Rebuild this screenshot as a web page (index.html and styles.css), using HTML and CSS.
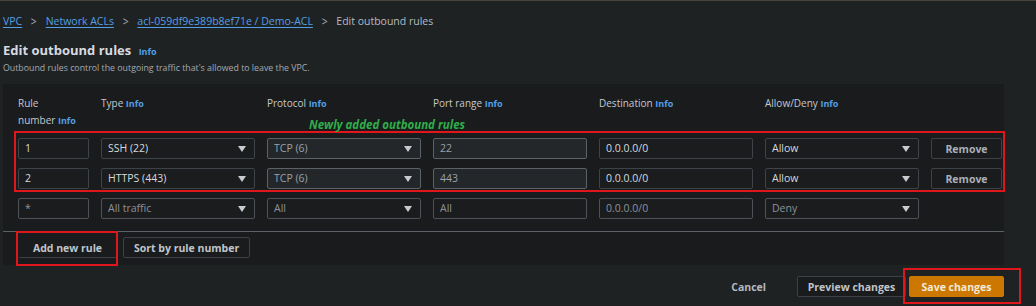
FILE: index.html
```html
<!DOCTYPE html>
<html lang="en">
<head>
    <meta charset="UTF-8">
    <meta name="viewport" content="width=device-width, initial-scale=1.0">
    <title>Edit outbound rules</title>
    <link rel="stylesheet" href="styles.css">
</head>
<body>
    <nav class="crumbs">
        <a href="#">VPC</a>
        <span class="sep">&gt;</span>
        <a href="#">Network ACLs</a>
        <span class="sep">&gt;</span>
        <a href="#">acl-059df9e389b8ef71e / Demo-ACL</a>
        <span class="sep">&gt;</span>
        <span class="current">Edit outbound rules</span>
    </nav>

    <h1 class="title">Edit outbound rules <span class="info">Info</span></h1>
    <p class="subtitle">Outbound rules control the outgoing traffic that's allowed to leave the VPC.</p>

    <div class="card">
        <div class="rules">
            <div class="head">Rule<br>number <span class="info">Info</span></div>
            <div class="head">Type <span class="info">Info</span></div>
            <div class="head">Protocol <span class="info">Info</span></div>
            <div class="head">Port range <span class="info">Info</span></div>
            <div class="head">Destination <span class="info">Info</span></div>
            <div class="head">Allow/Deny <span class="info">Info</span></div>
            <div class="head"></div>

            <div class="field">1</div>
            <div class="field select">SSH (22)</div>
            <div class="field select locked">TCP (6)</div>
            <div class="field locked">22</div>
            <div class="field">0.0.0.0/0</div>
            <div class="field select">Allow</div>
            <button class="btn">Remove</button>

            <div class="field">2</div>
            <div class="field select">HTTPS (443)</div>
            <div class="field select locked">TCP (6)</div>
            <div class="field locked">443</div>
            <div class="field">0.0.0.0/0</div>
            <div class="field select">Allow</div>
            <button class="btn">Remove</button>

            <div class="field dim">*</div>
            <div class="field select dim">All traffic</div>
            <div class="field select dim">All</div>
            <div class="field dim">All</div>
            <div class="field dim">0.0.0.0/0</div>
            <div class="field select dim">Deny</div>
            <div></div>
        </div>

        <div class="card-actions">
            <button class="btn flat">Add new rule</button>
            <button class="btn">Sort by rule number</button>
        </div>

        <!-- annotations drawn over the screenshot -->
        <div class="mark mark-rows"></div>
        <div class="mark mark-add"></div>
        <div class="note">Newly added outbound rules</div>
    </div>

    <div class="footer">
        <button class="link-btn">Cancel</button>
        <button class="btn">Preview changes</button>
        <div class="save-wrap">
            <button class="btn primary">Save changes</button>
            <div class="mark mark-save"></div>
        </div>
    </div>
</body>
</html>
```

FILE: styles.css
```css
body {
    margin: 0;
    padding: 0 32px 9px 3px;
    background: #1f2223;
    border-top: 1px solid #48443c;
    font-family: "Open Sans", "Liberation Sans", sans-serif;
    color: #d1d5db;
}
.crumbs {
    display: flex;
    align-items: center;
    gap: 7px;
    height: 40px;
    font-size: 10.5px;
}
.crumbs a {
    color: #539fe5;
    text-decoration: underline;
    text-underline-offset: 2px;
}
.crumbs .sep {
    color: #a9b0b8;
    font-size: 13px;
    margin: 0 1px;
    transform: scaleX(0.8);
}
.crumbs .current {
    color: #b4bac2;
}
.info {
    color: #539fe5;
    font-weight: 700;
    font-size: 9px;
}
.title {
    margin: 0;
    font-size: 13px;
    font-weight: 700;
    line-height: 18px;
    color: #d7dbe0;
}
.title .info {
    margin-left: 4px;
    font-size: 9px;
}
.subtitle {
    margin: 0;
    font-size: 8.8px;
    line-height: 14px;
    color: #a3a9b0;
}
.card {
    position: relative;
    margin-top: 9px;
    background: #191b1d;
    padding: 11px 0 7px;
}
.rules {
    display: grid;
    grid-template-columns: 71px repeat(5, 154px) 71px;
    column-gap: 12px;
    row-gap: 9px;
    padding: 0 15px;
    align-items: center;
}
.head {
    font-size: 10px;
    line-height: 17px;
    color: #c4c9cf;
    align-self: start;
}
.field {
    position: relative;
    height: 19px;
    border: 1px solid #3e4349;
    border-radius: 2px;
    background: #1a1c1e;
    padding: 0 6px;
    font-size: 10.5px;
    line-height: 19px;
    color: #d6dade;
}
.field.locked {
    background: #23272a;
    border-color: #5b6167;
    color: #9ba1a8;
}
.field.dim {
    color: #8d939a;
    border-color: #4c5258;
}
.select::after {
    content: "";
    position: absolute;
    right: 8px;
    top: 7px;
    border-left: 4px solid transparent;
    border-right: 4px solid transparent;
    border-top: 6px solid #c8ccd1;
}
.btn {
    height: 21px;
    border: 1px solid #3c4147;
    border-radius: 2px;
    background: #191b1d;
    color: #b4bac2;
    font-family: inherit;
    font-size: 10.5px;
    font-weight: 700;
    padding: 0 10px;
    white-space: nowrap;
}
.rules .btn {
    width: 71px;
    padding: 0;
    color: #a9b0b8;
}
.card-actions {
    display: flex;
    gap: 6px;
    margin-top: 12px;
    border-top: 1px solid #5c6168;
    padding: 5px 15px 0;
}
.btn.flat {
    width: 99px;
    border-color: transparent transparent #3c4147;
}
.btn.flat,
.card-actions .btn {
    color: #c0c5cb;
}
.footer {
    display: flex;
    justify-content: flex-end;
    align-items: center;
    gap: 3px;
    margin-top: 11px;
}
.link-btn {
    background: none;
    border: none;
    color: #b4bac2;
    font-family: inherit;
    font-size: 10.5px;
    font-weight: 700;
    margin-right: 22px;
}
.footer .btn {
    width: 109px;
    padding: 0;
    color: #c0c5cb;
}
.save-wrap {
    position: relative;
    display: flex;
}
.footer .btn.primary {
    width: 95px;
    background: #cc7800;
    border-color: #cc7800;
    color: #f3ead9;
}
.mark {
    position: absolute;
    border: 2px solid #e0161d;
    pointer-events: none;
}
.mark-rows {
    left: 11px;
    top: 47px;
    width: 987px;
    height: 57px;
}
.mark-add {
    left: 13px;
    top: 147px;
    width: 98px;
    height: 31px;
}
.mark-save {
    left: -6px;
    top: -8px;
    width: 114px;
    height: 32px;
}
.note {
    position: absolute;
    left: 306px;
    top: 33px;
    color: #2fae4a;
    font-size: 11.5px;
    font-weight: 700;
    font-style: italic;
}
```
